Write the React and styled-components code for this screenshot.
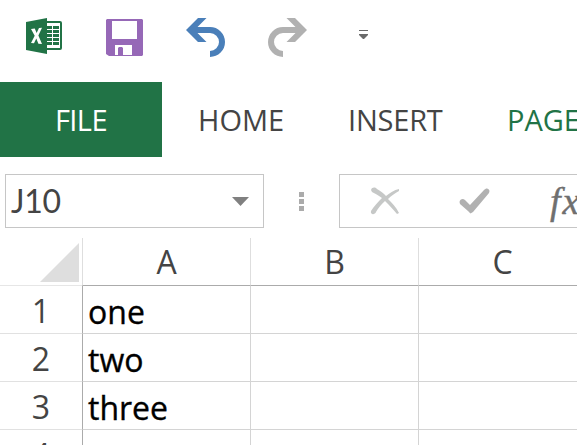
import React from "react";
import styled, { createGlobalStyle } from "styled-components";

const GlobalStyle = createGlobalStyle`
  body {
    margin: 0;
    overflow: hidden;
    background: #fff;
    font-family: "Open Sans", "Noto Sans", sans-serif;
  }
`;

const Window = styled.div`
  width: 577px;
  height: 445px;
  overflow: hidden;
  background: #fff;
  color: #444;
`;

const QuickAccess = styled.header`
  display: flex;
  align-items: flex-start;
  height: 64px;
  padding: 18px 0 0 26px;
`;

const Icon = styled.svg`
  display: block;
  flex: none;
  margin-left: ${({ $gap = 0 }) => $gap}px;
`;

const Tabs = styled.nav`
  display: flex;
  height: 75px;
  font-size: 29px;
  line-height: 75px;
`;

const Tab = styled.div`
  flex: none;
  width: ${({ $width }) => $width}px;
  box-sizing: border-box;
  padding-left: ${({ $indent }) => $indent}px;
  letter-spacing: ${({ $spacing = 0 }) => $spacing}px;
  color: ${({ $active }) => ($active ? "#217346" : "#444")};
  white-space: nowrap;
`;

const FileTab = styled(Tab)`
  background: #217346;
  color: #fff;
`;

const FormulaRow = styled.div`
  display: flex;
  align-items: center;
  height: 54px;
  padding: 17px 0 10px 5px;
`;

const NameBox = styled.div`
  display: flex;
  flex: none;
  align-items: center;
  justify-content: space-between;
  box-sizing: border-box;
  width: 259px;
  height: 54px;
  padding: 0 14px 0 5px;
  border: 1px solid #c6c6c6;
  font-family: Lato, "Open Sans", sans-serif;
  font-size: 32px;
  line-height: 54px;
  letter-spacing: -0.3px;
`;

const Grip = styled.div`
  display: flex;
  flex: none;
  flex-direction: column;
  gap: 2px;
  margin: 0 35px;
`;

const GripDot = styled.span`
  width: 5px;
  height: 5px;
  background: #ababab;
`;

const FormulaBox = styled.div`
  display: flex;
  flex: none;
  align-items: center;
  box-sizing: border-box;
  width: 260px;
  height: 54px;
  padding-left: 30px;
  border: 1px solid #c6c6c6;
`;

const FxLabel = styled.span`
  flex: none;
  margin-left: 60px;
  color: #6f6f6f;
  font-family: "Liberation Serif", serif;
  font-size: 38px;
  font-style: italic;
  line-height: 44px;
  letter-spacing: 2px;
  -webkit-text-stroke: 0.4px #6f6f6f;
`;

const Sheet = styled.main`
  display: grid;
  grid-template-columns: 82px 168px 168px 168px;
  grid-template-rows: 48px repeat(4, 48px);
  font-size: 32px;
`;

const Corner = styled.div`
  display: flex;
  justify-content: flex-end;
  box-sizing: border-box;
  padding: 5px 3px 0 0;
  border-bottom: 1px solid #e6e6e6;
`;

const ColumnHeader = styled.div`
  box-sizing: border-box;
  border-left: 1px solid #dedede;
  border-bottom: 1px solid #ababab;
  line-height: 48px;
  text-align: center;
`;

const RowHeader = styled.div`
  box-sizing: border-box;
  border-bottom: 1px solid #e1e1e1;
  line-height: 50px;
  text-align: center;
`;

const Cell = styled.div`
  box-sizing: border-box;
  padding-left: 5px;
  border-left: 1px solid ${({ $first }) => ($first ? "#ababab" : "#d4d4d4")};
  border-bottom: 1px solid #d4d4d4;
  color: #000;
  line-height: 51px;
  -webkit-text-stroke: 0.35px #000;
`;

const columns = ["A", "B", "C"];

const rows = [
  { id: 1, value: "one" },
  { id: 2, value: "two" },
  { id: 3, value: "three" },
  { id: 4, value: "" },
];

const ExcelIcon = () => (
  <Icon width="36" height="36" viewBox="0 0 36 36">
    <path d="M20 3H34Q36 3 36 5V30Q36 32 34 32H20Z" fill="#217346" />
    <path d="M21 5H34V30H21Z" fill="#fff" />
    <path
      d="M21 8h5v3h-5zM27 8h6v3h-6zM21 12h5v3h-5zM27 12h6v3h-6zM21 16h5v3h-5zM27 16h6v3h-6zM21 20h5v3h-5zM27 20h6v3h-6zM21 24h5v3h-5zM27 24h6v3h-6z"
      fill="#217346"
    />
    <path d="M0 4L21 0V36L0 32Z" fill="#217346" />
    <path d="M5 11L8.8 10.5L10.6 15L13 10L16 9.8L12.4 17.5L16 26L12.4 25.8L10.3 20.5L8 25.3L5 25L8.7 17.8Z" fill="#fff" />
  </Icon>
);

const SaveIcon = () => (
  <Icon $gap={44} width="37" height="39" viewBox="0 0 37 39">
    <path d="M1 1H36L37 2V37L36 38H3L0 36V2Z" fill="#9668b7" />
    <path d="M6 3H31V21H6Z" fill="#fff" />
    <path d="M9 27H26V37H17V30L16 29H13L12 30V37H9Z" fill="#fff" />
  </Icon>
);

const Arrow = ({ gap, color, flip }) => (
  <Icon $gap={gap} width="39" height="39" viewBox="0 0 39 39">
    <g transform={flip ? "translate(39 0) scale(-1 1)" : undefined} fill={color}>
      <path d="M0 12L12 0H20.5L11.5 9H24A15 15 0 0 1 24 39V33A9 9 0 0 0 24 15H11.5L20.5 24H12Z" />
    </g>
  </Icon>
);

const CustomizeIcon = () => (
  <Icon $gap={52} width="9" height="22" viewBox="0 0 9 22">
    <path d="M0 12H9V13H0ZM0 16H9V17L5 21H4L0 17Z" fill="#6a6a6a" />
  </Icon>
);

const CancelIcon = () => (
  <Icon width="30" height="28" viewBox="0 0 30 28">
    <path
      d="M1 3C2 0 5 0 7 2C11 4 14 7 16 9C20 6 24 3 29 2V4C25 6 21 9 18 12C22 16 26 20 29 26L27 27C23 22 19 18 15 14C11 18 8 21 6 25C5 28 0 28 1 24C4 19 8 15 12 11C8 8 4 6 2 5Z"
      fill="#c6c8c7"
    />
  </Icon>
);

const EnterIcon = () => (
  <Icon $gap={59} width="31" height="26" viewBox="0 0 31 26">
    <path
      d="M0.5 14C1 11 4 10 6 12L11 17L25 2C27 -0.5 30 0 30.5 3L30 5L14 24L11.5 25.5L9 23L1 16Z"
      fill="#b1b1b1"
    />
  </Icon>
);

const App = () => (
  <>
    <GlobalStyle />
    <Window>
      <QuickAccess>
        <ExcelIcon />
        <SaveIcon />
        <Arrow gap={43} color="#4a7fb9" />
        <Arrow gap={43} color="#b1b1b1" flip />
        <CustomizeIcon />
      </QuickAccess>
      <Tabs>
        <FileTab $width={162} $indent={55} $spacing={-0.6}>FILE</FileTab>
        <Tab $width={150} $indent={36}>HOME</Tab>
        <Tab $width={160} $indent={36} $spacing={-0.2}>INSERT</Tab>
        <Tab $width={110} $indent={35} $active>PAGE</Tab>
      </Tabs>
      <FormulaRow>
        <NameBox>
          J10
          <Icon width="17" height="9" viewBox="0 0 17 9">
            <path d="M0 0H17L8.5 9Z" fill="#808080" />
          </Icon>
        </NameBox>
        <Grip>
          <GripDot />
          <GripDot />
          <GripDot />
        </Grip>
        <FormulaBox>
          <CancelIcon />
          <EnterIcon />
          <FxLabel>fx</FxLabel>
        </FormulaBox>
      </FormulaRow>
      <Sheet>
        <Corner>
          <Icon width="39" height="39" viewBox="0 0 39 39">
            <path d="M39 0V39H0Z" fill="#dedede" />
          </Icon>
        </Corner>
        {columns.map(name => (
          <ColumnHeader key={name}>{name}</ColumnHeader>
        ))}
        {rows.map(row => (
          <React.Fragment key={row.id}>
            <RowHeader>{row.id}</RowHeader>
            <Cell $first>{row.value}</Cell>
            <Cell />
            <Cell />
          </React.Fragment>
        ))}
      </Sheet>
    </Window>
  </>
);

export default App;
